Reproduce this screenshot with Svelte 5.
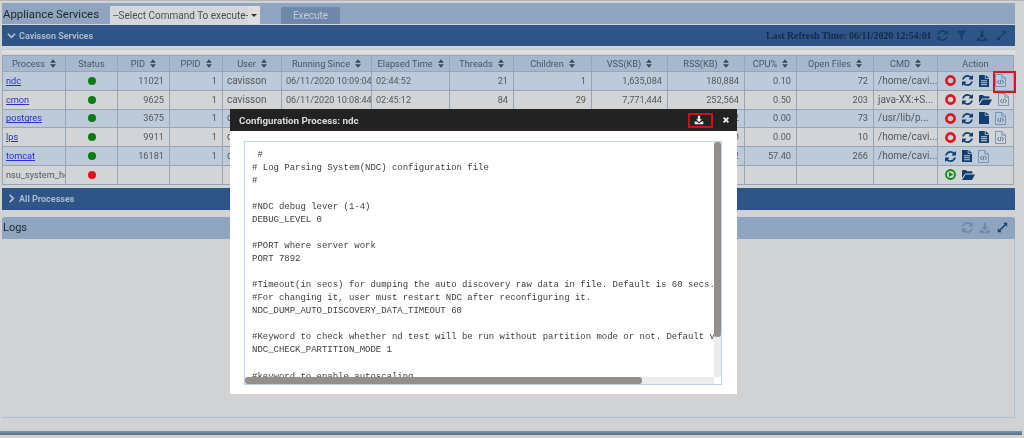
<script>
  const columns = [
    { label: 'Process', w: 63 },
    { label: 'Status', w: 52, plain: true },
    { label: 'PID', w: 52 },
    { label: 'PPID', w: 53 },
    { label: 'User', w: 59 },
    { label: 'Running Since', w: 90 },
    { label: 'Elapsed Time', w: 78 },
    { label: 'Threads', w: 64 },
    { label: 'Children', w: 78 },
    { label: 'VSS(KB)', w: 76 },
    { label: 'RSS(KB)', w: 77 },
    { label: 'CPU%', w: 52 },
    { label: 'Open Files', w: 77 },
    { label: 'CMD', w: 64 },
    { label: 'Action', w: 76, plain: true }
  ];

  const rows = [
    { name: 'ndc', status: 'up', pid: '11021', ppid: '1', user: 'cavisson', since: '06/11/2020 10:09:04', elapsed: '02:44:52', threads: '21', children: '1', vss: '1,635,084', rss: '180,884', cpu: '0.10', files: '72', cmd: '/home/cavi...', actions: ['stop', 'refresh', 'file', 'code'] },
    { name: 'cmon', status: 'up', pid: '9625', ppid: '1', user: 'cavisson', since: '06/11/2020 10:08:44', elapsed: '02:45:12', threads: '84', children: '29', vss: '7,771,444', rss: '252,564', cpu: '0.50', files: '203', cmd: 'java-XX:+S...', actions: ['stop', 'refresh', 'folder', 'code'] },
    { name: 'postgres', status: 'up', pid: '3675', ppid: '1', user: 'c', since: '', elapsed: '', threads: '', children: '', vss: '', rss: '2', cpu: '0.00', files: '73', cmd: '/usr/lib/p...', actions: ['stop', 'refresh', 'blank', 'code'] },
    { name: 'lps', status: 'up', pid: '9911', ppid: '1', user: 'c', since: '', elapsed: '', threads: '', children: '', vss: '', rss: '0', cpu: '0.00', files: '10', cmd: '/home/cavi...', actions: ['stop', 'refresh', 'file', 'code'] },
    { name: 'tomcat', status: 'up', pid: '16181', ppid: '1', user: 'c', since: '', elapsed: '', threads: '', children: '', vss: '', rss: '2', cpu: '57.40', files: '266', cmd: '/home/cavi...', actions: ['refresh', 'file', 'code'] },
    { name: 'nsu_system_health', status: 'down', pid: '', ppid: '', user: '', since: '', elapsed: '', threads: '', children: '', vss: '', rss: '', cpu: '', files: '', cmd: '', actions: ['start', 'folder'] }
  ];

  const config = ` #
# Log Parsing System(NDC) configuration file
#

#NDC debug lever (1-4)
DEBUG_LEVEL 0

#PORT where server work
PORT 7892

#Timeout(in secs) for dumping the auto discovery raw data in file. Default is 60 secs.
#For changing it, user must restart NDC after reconfiguring it.
NDC_DUMP_AUTO_DISCOVERY_DATA_TIMEOUT 60

#Keyword to check whether nd test will be run without partition mode or not. Default v
NDC_CHECK_PARTITION_MODE 1

#keyword to enable autoscaling`;

  const refresh = 'M1511 928q0 5-1 7-64 268-268 434.5t-478 166.5q-146 0-282.500-55t-243.500-157l-129 129q-19 19-45 19t-45-19-19-45v-448q0-26 19-45t45-19h448q26 0 45 19t19 45-19 45l-137 137q71 66 161 102t187 36q134 0 250-65t186-179q11-17 53-117 8-23 30-23h192q13 0 22.500 9.500t9.500 22.500zm25-800v448q0 26-19 45t-45 19h-448q-26 0-45-19t-19-45 19-45l138-138q-148-137-349-137-134 0-250 65t-186 179q-11 17-53 117-8 23-30 23h-199q-13 0-22.500-9.500t-9.500-22.500v-7q65-268 270-434.500t480-166.500q146 0 284 55.500t245 156.500l130-129q19-19 45-19t45 19 19 45z';
</script>

{#snippet refreshIcon(cls)}
  <svg class={cls} viewBox="0 0 1536 1536" width="11" height="11"><path d={refresh} /></svg>
{/snippet}

{#snippet downloadIcon(cls)}
  <svg class={cls} viewBox="0 0 14 14" width="12" height="12"><path d="M5.400 1h3.200v5h2.400L7 10 3 6h2.400z" /><path d="M1 9h2.600L7 12l3.400-3H13v4H1z" /></svg>
{/snippet}

{#snippet expandIcon(cls)}
  <svg class={cls} viewBox="0 0 14 14" width="11" height="11"><path d="M8 1h5v5l-1.800-1.800L4.200 11.200 6 13H1V8l1.800 1.800 7-7z" /></svg>
{/snippet}

{#snippet sortIcon()}
  <svg class="sort" viewBox="0 0 7 10" width="6" height="9"><path d="M3.500 0 7 4H0zM3.500 10 0 6h7z" /></svg>
{/snippet}

{#snippet actionIcon(kind)}
  {#if kind === 'stop'}
    <svg class="act" viewBox="0 0 11 11" width="11" height="11"><circle cx="5.500" cy="5.500" r="4.100" fill="none" stroke="#e0101c" stroke-width="2.600" /></svg>
  {:else if kind === 'start'}
    <svg class="act" viewBox="0 0 11 11" width="11" height="11"><circle cx="5.500" cy="5.500" r="4.500" fill="none" stroke="#0a8a12" stroke-width="1.800" /><path d="M4 2.900 8.200 5.500 4 8.100z" fill="#0a8a12" /></svg>
  {:else if kind === 'refresh'}
    <svg class="act blue" viewBox="0 0 1536 1536" width="11" height="11"><path d={refresh} /></svg>
  {:else if kind === 'file'}
    <svg class="act blue" viewBox="0 0 10 12" width="10" height="12"><path fill-rule="evenodd" d="M0 0h5.800v3.800H10V12H0zM6.600 0 10 3H6.600zM2 5.300v1h6v-1zM2 7.300v1h6v-1zM2 9.300v1h6v-1z" /></svg>
  {:else if kind === 'blank'}
    <svg class="act blue" viewBox="0 0 10 12" width="10" height="12"><path d="M0 0h5.800v3.800H10V12H0zM6.600 0 10 3H6.600z" /></svg>
  {:else if kind === 'folder'}
    <svg class="act blue" viewBox="0 0 13 10" width="13" height="10"><path d="M0 1q0-1 1-1h3l1 1.200h4.500q1 0 1 1V3.500H3.200L0 8zM3.600 4.400H13L10 10H0z" /></svg>
  {:else}
    <svg class="act" viewBox="0 0 11 13" width="11" height="13"><path d="M.5.500h6.500l3.500 3.500v8.500H.5zM6.800.700V4.200h3.500" fill="none" stroke="#6d90b5" stroke-width=".9" /><path d="M4 6 2.400 8l1.600 2M7 6l1.600 2L7 10M6 5.700 5 10.300" fill="none" stroke="#3a638e" stroke-width=".8" /></svg>
  {/if}
{/snippet}

<div class="page">
  <div class="topbar">
    <span class="top-title">Appliance Services</span>
    <div class="select">
      <span class="select-text">--Select Command To execute-</span>
      <span class="select-box"><span class="select-arrow"></span></span>
    </div>
    <button class="execute">Execute</button>
  </div>

  <div class="section first">
    <svg class="chevron" viewBox="0 0 10 10" width="9" height="9"><path d="M1 3l4 4 4-4" /></svg>
    <span>Cavisson Services</span>
    <div class="section-right">
      <span class="refresh-time">Last Refresh Time: 06/11/2020 12:54:01</span>
      {@render refreshIcon('tool dark')}
      <svg class="tool dark" viewBox="0 0 14 14" width="11" height="11"><path d="M1 1h12L8.500 7v6l-3-2V7z" /></svg>
      {@render downloadIcon('tool dark')}
      {@render expandIcon('tool dark')}
    </div>
  </div>

  <div class="strip"></div>

  <table>
    <colgroup>
      {#each columns as col}
        <col style="width: {col.w}px" />
      {/each}
    </colgroup>
    <thead>
      <tr>
        {#each columns as col}
          <th>{col.label}{#if !col.plain}{@render sortIcon()}{/if}</th>
        {/each}
      </tr>
    </thead>
    <tbody>
      {#each rows as row, i}
        <tr class:odd={i % 2 === 0}>
          <td class="name">
            {#if row.status === 'up'}<a href="#top">{row.name}</a>{:else}{row.name}{/if}
          </td>
          <td class="center"><span class="dot" class:down={row.status === 'down'}></span></td>
          <td class="num">{row.pid}</td>
          <td class="num">{row.ppid}</td>
          <td class="text">{row.user}</td>
          <td class="time">{row.since}</td>
          <td class="time">{row.elapsed}</td>
          <td class="num">{row.threads}</td>
          <td class="num">{row.children}</td>
          <td class="num">{row.vss}</td>
          <td class="num">{row.rss}</td>
          <td class="num">{row.cpu}</td>
          <td class="num">{row.files}</td>
          <td class="text">{row.cmd}</td>
          <td class="actions">
            <div class="action-row">
              {#each row.actions as kind}
                {@render actionIcon(kind)}
              {/each}
            </div>
          </td>
        </tr>
      {/each}
    </tbody>
  </table>

  <div class="section second">
    <svg class="chevron" viewBox="0 0 10 10" width="9" height="9"><path d="M3 1l4 4-4 4" /></svg>
    <span>All Processes</span>
  </div>

  <div class="logs">
    <span>Logs</span>
    <div class="section-right tight">
      {@render refreshIcon('tool faded')}
      {@render downloadIcon('tool faded')}
      {@render expandIcon('tool dark')}
    </div>
  </div>

  <div class="filler"></div>
  <div class="footer"></div>

  <div class="modal">
    <div class="modal-head">
      <span>Configuration Process: ndc</span>
      <svg class="modal-dl" viewBox="0 0 14 14" width="10" height="10"><path d="M5.400 1h3.200v5h2.400L7 10 3 6h2.400z" /><path d="M1 9h2.600L7 12l3.400-3H13v4H1z" /></svg>
      <svg class="modal-x" viewBox="0 0 10 10" width="6" height="6"><path d="M1 1l8 8M9 1l-8 8" /></svg>
    </div>
    <div class="modal-body">
      <div class="code-box">
        <pre>{config}</pre>
        <div class="vbar"><div class="vthumb"></div></div>
        <div class="hbar"><div class="hthumb"></div></div>
      </div>
    </div>
    <div class="mark mark-dl"></div>
  </div>

  <div class="mark mark-code"></div>
</div>

<style>
  :global(body) {
    margin: 0;
    background: #d0d2d3;
  }

  .page {
    position: relative;
    width: 1024px;
    height: 438px;
    overflow: hidden;
    display: flex;
    flex-direction: column;
    box-sizing: border-box;
    padding: 2px 9px 0 2px;
    background: #d0d2d3;
    border-top: 1px solid #b4b6b8;
    font-family: Roboto, "Liberation Sans", sans-serif;
    font-size: 10px;
    color: #55585c;
    filter: blur(0.4px);
  }

  .topbar {
    height: 21px;
    flex: none;
    display: flex;
    align-items: flex-end;
    background: #8fa5bf;
    color: #1c2530;
    font-size: 11.400px;
  }

  .top-title {
    width: 108px;
    padding-left: 1px;
    box-sizing: border-box;
    align-self: center;
  }

  .select {
    width: 150px;
    height: 18px;
    background: #d5d6d7;
    display: flex;
    align-items: center;
    justify-content: space-between;
    padding-left: 3px;
    box-sizing: border-box;
    color: #4b4e52;
    font-size: 10px;
    white-space: nowrap;
  }

  .select-box {
    width: 14px;
    height: 100%;
    background: #dededf;
    display: flex;
    align-items: center;
    justify-content: center;
  }

  .select-arrow {
    border: 3px solid transparent;
    border-top: 3px solid #333;
    border-bottom: 0;
  }

  .execute {
    margin-left: 21px;
    width: 59px;
    height: 17px;
    padding: 0;
    border: 0;
    border-radius: 2px 2px 0 0;
    background: #6d88a8;
    color: #c2cedb;
    font: 10px Roboto, sans-serif;
  }

  .section {
    height: 21px;
    flex: none;
    display: flex;
    align-items: center;
    background: #2f5586;
    color: #a9b9cc;
    font-weight: 700;
    font-size: 9px;
    padding-left: 5px;
  }

  .first {
    margin-top: 1px;
  }

  .second {
    margin-top: 3px;
    height: 22px;
  }

  .section > span {
    margin-left: 3px;
  }

  .chevron {
    fill: none;
    stroke: #b5c3d4;
    stroke-width: 1.800;
  }

  .section-right {
    margin-left: auto;
    display: flex;
    align-items: center;
    gap: 8.500px;
    padding-right: 8px;
  }

  .section-right.tight {
    gap: 6px;
    padding-right: 7px;
  }

  .refresh-time {
    margin-right: -3.500px;
    font-family: "Liberation Serif", serif;
    font-size: 9.800px;
    color: #14294a;
    font-weight: 700;
  }

  .tool.dark {
    fill: #17406f;
  }

  .tool.faded {
    fill: #6f8cab;
  }

  .strip {
    height: 5px;
    margin-top: 3px;
    flex: none;
    background: #dededf;
    border-top: 1px solid #c4c8cc;
    box-sizing: border-box;
  }

  table {
    width: 1011px;
    flex: none;
    table-layout: fixed;
    border-collapse: collapse;
    margin-top: 1px;
  }

  th, td {
    border: 1px solid #97a6b6;
    overflow: hidden;
    white-space: nowrap;
    padding: 0 3px;
    box-sizing: border-box;
  }

  th {
    height: 16px;
    background: #a5b8ce;
    font-weight: 400;
    font-size: 9.200px;
    color: #4a5663;
    text-align: center;
  }

  td {
    height: 18.800px;
    padding-top: 0;
    padding-bottom: 0;
    background: #d2d4d5;
    font-size: 9.200px;
    line-height: 12px;
  }

  tr.odd td {
    background: #bccad9;
  }

  .sort {
    margin-left: 5px;
    fill: #3f4a55;
    vertical-align: -1px;
  }

  .num {
    text-align: right;
    padding-right: 5px;
  }

  .center {
    text-align: center;
    padding: 0;
  }

  .text {
    padding-left: 4px;
    font-size: 10px;
  }

  .time {
    padding-left: 4px;
    padding-right: 0;
    font-size: 9.100px;
  }

  .name {
    padding-left: 3px;
  }

  .name a {
    color: #2a2fd0;
  }

  .dot {
    display: block;
    margin: 0 auto;
    width: 8px;
    height: 8px;
    border-radius: 50%;
    background: #0a7d12;
  }

  .dot.down {
    background: #e5101c;
  }

  .action-row {
    display: flex;
    align-items: center;
    gap: 6px;
    padding-left: 4px;
  }

  .act {
    flex: none;
  }

  .act.blue {
    fill: #123f72;
  }

  .logs {
    margin-top: 7px;
    height: 22px;
    flex: none;
    display: flex;
    align-items: center;
    background: #8fa5bf;
    border-radius: 3px 3px 0 0;
    color: #1c2530;
    font-size: 11px;
    padding-left: 1px;
  }

  .filler {
    height: 179px;
    flex: none;
    box-sizing: border-box;
    border-right: 1px solid #b0c0d8;
    border-bottom: 1px solid #b0c0d8;
  }

  .footer {
    height: 4px;
    flex: none;
    margin: 13px -7px 0 -2px;
    background: linear-gradient(#7b93ad, #5f6e7e);
  }

  .modal {
    position: absolute;
    left: 230px;
    top: 108px;
    width: 507px;
    height: 285px;
    background: #fff;
    display: flex;
    flex-direction: column;
  }

  .modal-head {
    height: 22px;
    flex: none;
    display: flex;
    align-items: center;
    background: #222;
    color: #dcdcdc;
    font-weight: 700;
    font-size: 9.800px;
    padding-left: 9px;
  }

  .modal-dl {
    margin-left: auto;
    margin-right: 19px;
    fill: #eee;
  }

  .modal-x {
    margin-right: 8px;
    stroke: #eee;
    stroke-width: 3;
  }

  .modal-body {
    flex: 1;
    padding: 10px 15px 9px 14px;
    min-height: 0;
    display: flex;
  }

  .code-box {
    position: relative;
    flex: 1;
    border: 1px solid #bcd4ec;
    overflow: hidden;
  }

  pre {
    margin: 0;
    padding: 6.500px 0 0 7px;
    font-family: "Liberation Mono", monospace;
    font-size: 8.980px;
    line-height: 13.070px;
    color: #3d3d3d;
  }

  .vbar {
    position: absolute;
    top: 0;
    right: 0;
    width: 7px;
    bottom: 7px;
    background: #ececec;
  }

  .vthumb {
    height: 195px;
    background: #948f8c;
    border-radius: 3px;
  }

  .hbar {
    position: absolute;
    left: 0;
    right: 7px;
    bottom: 0;
    height: 7px;
    background: #ececec;
  }

  .hthumb {
    width: 397px;
    height: 100%;
    background: #948f8c;
    border-radius: 3px;
  }

  .mark {
    position: absolute;
    border: 2px solid #e0121c;
    box-sizing: border-box;
  }

  .mark-dl {
    left: 458px;
    top: 4px;
    width: 25px;
    height: 15px;
    border-color: #c90f18;
  }

  .mark-code {
    left: 993px;
    top: 70px;
    width: 23px;
    height: 22px;
  }
</style>
